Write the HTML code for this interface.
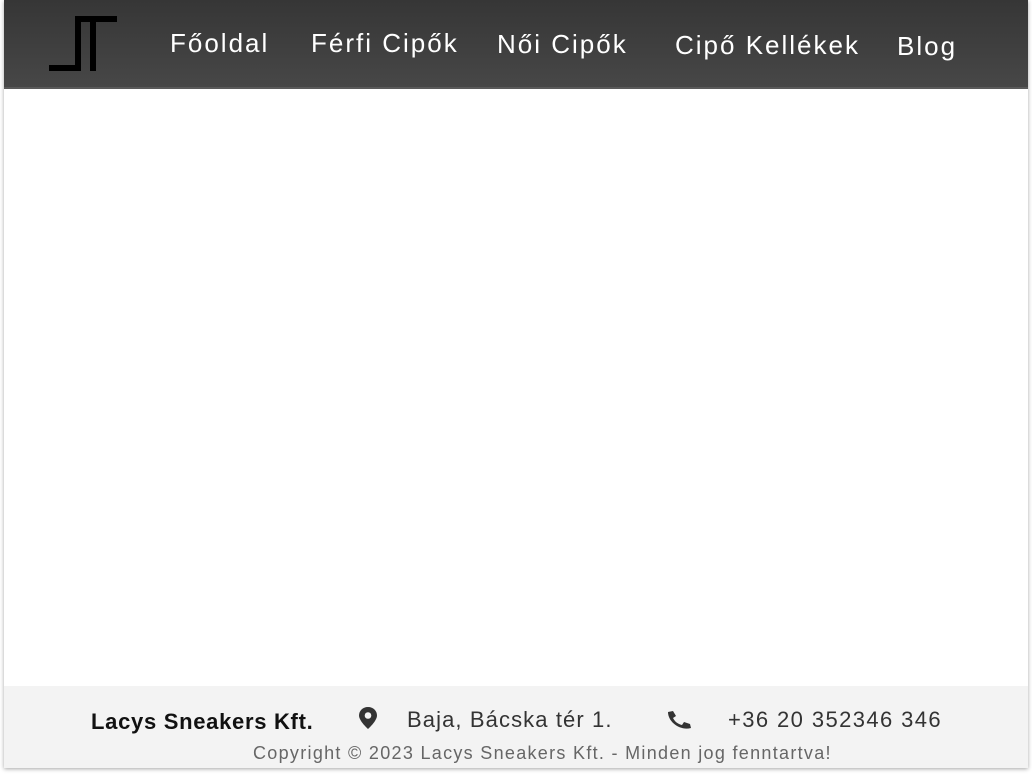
<!DOCTYPE html>
<html><head><meta charset="utf-8"><style>
body{margin:0;width:1032px;height:776px;background:#fff;position:relative;overflow:hidden;font-family:"Liberation Sans",sans-serif}
.wrap{position:absolute;left:4px;top:0;width:1024px;height:768px;background:#fff;box-shadow:0 1px 4px rgba(0,0,0,.35)}
.hdr{position:absolute;left:0;top:0;width:1024px;height:89px;background:linear-gradient(#363636,#474747);border-bottom:2px solid #5a5a5a;box-sizing:border-box}
.n{position:absolute;color:#fff;font-size:26px;white-space:nowrap;letter-spacing:2px}
.ftr{position:absolute;left:0;top:686px;width:1024px;height:82px;background:#f3f3f3}
.f{position:absolute;white-space:nowrap;color:#333}
</style></head><body>
<div class="wrap">
<div class="hdr">
<svg style="position:absolute;left:44px;top:15px" width="72" height="58"><path d="M1 53 H30 V4 H69 M45 4 V56" stroke="#000" stroke-width="6" fill="none"/></svg>
<div class="n" style="left:166px;top:28px">Főoldal</div>
<div class="n" style="left:307px;top:28px">Férfi Cipők</div>
<div class="n" style="left:493px;top:29px">Női Cipők</div>
<div class="n" style="left:671px;top:30px">Cipő Kellékek</div>
<div class="n" style="left:893px;top:31px">Blog</div>
</div>
<div class="ftr">
<div class="f" style="left:87px;top:23px;font-size:22px;font-weight:bold;color:#111;letter-spacing:0.7px">Lacys Sneakers Kft.</div>
<svg style="position:absolute;left:353px;top:20px" width="22" height="24" viewBox="0 0 22 24"><path d="M11 1C5.5 1 2 5 2 9.5 2 15 11 23 11 23S20 15 20 9.5C20 5 16.5 1 11 1Z" fill="#333"/><circle cx="11" cy="9.5" r="3.3" fill="#f3f3f3"/></svg>
<div class="f" style="left:403px;top:21px;font-size:22px;letter-spacing:1.1px">Baja, Bácska tér 1.</div>
<svg style="position:absolute;left:661px;top:24px" width="28" height="20" viewBox="0 0 28 20"><path d="M3 2 L8 1 L11 6 L8 8 C10 12 13 14 17 15 L19 12 L25 14 L26 18 C15 21 3 12 3 2Z" fill="#333"/></svg>
<div class="f" style="left:724px;top:21px;font-size:22px;letter-spacing:1.4px">+36 20 352346 346</div>
<div class="f" style="left:249px;top:57px;font-size:18px;color:#666;letter-spacing:1.3px">Copyright © 2023 Lacys Sneakers Kft. - Minden jog fenntartva!</div>
</div>
</div>
</body></html>
